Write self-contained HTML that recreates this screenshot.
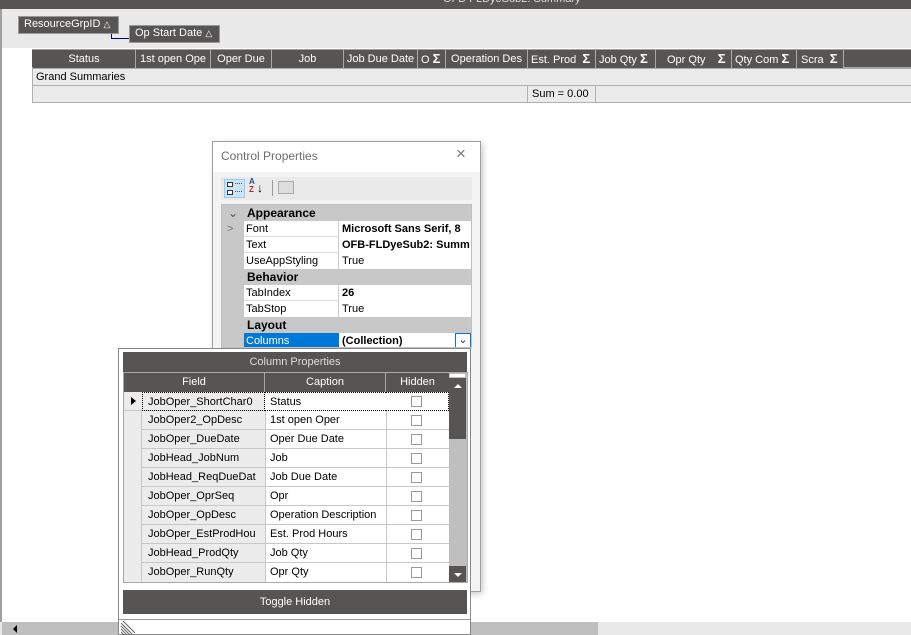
<!DOCTYPE html>
<html><head><meta charset="utf-8"><style>
*{margin:0;padding:0;box-sizing:border-box}
body{width:911px;height:635px;overflow:hidden;background:#fff;font-family:"Liberation Sans",Arial,sans-serif;font-size:11px;color:#000;position:relative}
.a{position:absolute}
.hd{background:#575553;color:#fff;text-align:center;line-height:18px;height:18px;border-right:1px solid #a9a9a9;white-space:nowrap;overflow:hidden;font-size:11px}
.sig{font-weight:bold;font-size:13px}
.pr{font-size:11px;line-height:16px;height:16px;white-space:nowrap;overflow:hidden}
.cr{height:19px;line-height:18px;border-bottom:1px solid #c8c8c8;font-size:11px}
.cb{position:absolute;width:11px;height:11px;border:1px solid #999;background:#fff;left:411px;top:4px}
</style></head><body>
<div class="a" style="left:0;top:0;width:911px;height:9px;background:#575553;overflow:hidden"><div class="a" style="left:443px;top:-7px;color:#ddd;font-size:11px">OFB-FLDyeSub2: Summary</div></div>
<div class="a" style="left:0;top:9px;width:911px;height:39px;background:#e9e9e9"></div>
<div class="a" style="left:0;top:9px;width:2px;height:613px;background:#a0a0a0"></div>
<div class="a" style="left:18px;top:16px;width:101px;height:18px;background:#575553;border:1px solid #999;color:#fff;line-height:15px;padding-left:5px">ResourceGrpID <span style="font-size:9px">&#9651;</span></div>
<div class="a" style="left:111px;top:34px;width:1px;height:5px;background:#00008b"></div>
<div class="a" style="left:111px;top:38px;width:19px;height:1px;background:#00008b"></div>
<div class="a" style="left:129px;top:25px;width:91px;height:18px;background:#575553;border:1px solid #999;color:#fff;line-height:15px;padding-left:5px">Op Start Date <span style="font-size:9px">&#9651;</span></div>
<div class="a" style="left:32px;top:49px;width:879px;height:20px;background:#575553;border-top:1px solid #a0a0a0;border-bottom:2px solid #a9a9a9"></div>
<div class="a hd" style="left:33px;top:50px;width:103px">Status</div>
<div class="a hd" style="left:136px;top:50px;width:75px">1st open Ope</div>
<div class="a hd" style="left:211px;top:50px;width:61px">Oper Due</div>
<div class="a hd" style="left:272px;top:50px;width:72px">Job</div>
<div class="a hd" style="left:344px;top:50px;width:74px">Job Due Date</div>
<div class="a hd" style="left:418px;top:50px;width:28px;text-align:left;padding-left:3px">O <span class="sig">&Sigma;</span></div>
<div class="a hd" style="left:446px;top:50px;width:82px">Operation Des</div>
<div class="a hd" style="left:528px;top:50px;width:68px;text-align:left;padding-left:3px">Est. Prod &nbsp;<span class="sig">&Sigma;</span></div>
<div class="a hd" style="left:596px;top:50px;width:60px;text-align:left;padding-left:3px">Job Qty <span class="sig">&Sigma;</span></div>
<div class="a hd" style="left:656px;top:50px;width:76px;text-align:left;padding-left:11px">Opr Qty &nbsp;&nbsp;&nbsp;<span class="sig">&Sigma;</span></div>
<div class="a hd" style="left:732px;top:50px;width:65px;text-align:left;padding-left:3px">Qty Com <span class="sig">&Sigma;</span></div>
<div class="a hd" style="left:797px;top:50px;width:47px;text-align:left;padding-left:4px">Scra &nbsp;<span class="sig">&Sigma;</span></div>
<div class="a" style="left:32px;top:69px;width:879px;height:17px;background:#ebebeb;border-left:1px solid #b0b0b0;border-bottom:1px solid #b0b0b0;line-height:16px;padding-left:3px">Grand Summaries</div>
<div class="a" style="left:32px;top:86px;width:879px;height:17px;background:#ebebeb;border-left:1px solid #b0b0b0;border-bottom:1px solid #b0b0b0"></div>
<div class="a" style="left:527px;top:86px;width:69px;height:17px;border-left:1px solid #b0b0b0;border-right:1px solid #b0b0b0;line-height:16px;padding-left:4px">Sum = 0.00</div>
<div class="a" style="left:0;top:622px;width:911px;height:13px;background:#e8e8e8"></div>
<div class="a" style="left:2px;top:622px;width:596px;height:13px;background:#bfbfbf"></div>
<div class="a" style="left:13px;top:625px;width:0;height:0;border-top:4px solid transparent;border-bottom:4px solid transparent;border-right:4px solid #000"></div>
<div class="a" style="left:212px;top:141px;width:269px;height:451px;background:#f3f3f3;border:1px solid #a0a0a0;box-shadow:2px 2px 6px rgba(0,0,0,.2)"></div>
<div class="a" style="left:213px;top:142px;width:267px;height:30px;background:#fff"></div>
<div class="a" style="left:221px;top:149px;color:#6d6d6d;font-size:12px">Control Properties</div>
<div class="a" style="left:456px;top:144px;color:#777;font-size:17px">&#215;</div>
<div class="a" style="left:221px;top:177px;width:251px;height:23px;background:#eaeaea"></div>
<div class="a" style="left:224px;top:179px;width:21px;height:19px;background:#cce4f7;border:1px solid #99c9ef"></div>
<div class="a" style="left:227px;top:182px;width:6px;height:5px;border:1px solid #333;background:#fff"></div>
<div class="a" style="left:227px;top:190px;width:6px;height:5px;border:1px solid #333;background:#fff"></div>
<div class="a" style="left:235px;top:183px;width:7px;height:1px;border-top:1px dotted #555"></div>
<div class="a" style="left:235px;top:191px;width:7px;height:1px;border-top:1px dotted #555"></div>
<div class="a" style="left:249px;top:178px;font-size:8px;font-weight:bold;line-height:8px;color:#1a4f9c">A<br><span style="color:#b03030">Z</span></div>
<div class="a" style="left:257px;top:180px;font-size:12px;line-height:16px">&#8595;</div>
<div class="a" style="left:272px;top:180px;width:1px;height:16px;background:#999"></div>
<div class="a" style="left:278px;top:181px;width:16px;height:13px;border:1px solid #aaa;background:#ddd"></div>
<div class="a" style="left:221px;top:204px;width:251px;height:144px;background:#fff;border:1px solid #c0c0c0;overflow:hidden">
 <div class="pr" style="background:#c8c8c8;font-weight:bold;font-size:12px;padding-left:25px"><span class="a" style="left:6px;font-weight:normal;color:#555">&#8964;</span>Appearance</div>
 <div class="pr" style="display:flex"><div style="width:22px;background:#c8c8c8;color:#777;padding-left:5px">&gt;</div><div style="width:95px;border-right:1px solid #ccc;padding-left:2px;border-bottom:1px solid #ddd">Font</div><div style="padding-left:3px;font-weight:bold">Microsoft Sans Serif, 8</div></div>
 <div class="pr" style="display:flex"><div style="width:22px;background:#c8c8c8"></div><div style="width:95px;border-right:1px solid #ccc;padding-left:2px;border-bottom:1px solid #ddd">Text</div><div style="padding-left:3px;font-weight:bold">OFB-FLDyeSub2: Summ</div></div>
 <div class="pr" style="display:flex"><div style="width:22px;background:#c8c8c8"></div><div style="width:95px;border-right:1px solid #ccc;padding-left:2px">UseAppStyling</div><div style="padding-left:3px">True</div></div>
 <div class="pr" style="background:#c8c8c8;font-weight:bold;font-size:12px;padding-left:25px">Behavior</div>
 <div class="pr" style="display:flex"><div style="width:22px;background:#c8c8c8"></div><div style="width:95px;border-right:1px solid #ccc;padding-left:2px;border-bottom:1px solid #ddd">TabIndex</div><div style="padding-left:3px;font-weight:bold">26</div></div>
 <div class="pr" style="display:flex"><div style="width:22px;background:#c8c8c8"></div><div style="width:95px;border-right:1px solid #ccc;padding-left:2px">TabStop</div><div style="padding-left:3px">True</div></div>
 <div class="pr" style="background:#c8c8c8;font-weight:bold;font-size:12px;padding-left:25px">Layout</div>
 <div class="pr" style="display:flex"><div style="width:22px;background:#c8c8c8"></div><div style="width:95px;background:#0078d7;color:#fff;padding-left:2px">Columns</div><div style="padding-left:3px;font-weight:bold;flex:1">(Collection)</div><div style="width:16px;height:15px;border:1px solid #0078d7;text-align:center;line-height:12px;color:#333">&#8964;</div></div>
</div>
<div class="a" style="left:469px;top:515px;width:2px;height:72px;background:#555"></div>
<div class="a" style="left:118px;top:348px;width:353px;height:287px;background:#fff;border:1px solid #888"></div>
<div class="a" style="left:123px;top:352px;width:344px;height:20px;background:#575553;color:#ddd;text-align:center;line-height:20px">Column Properties</div>
<div class="a" style="left:123px;top:372px;width:345px;height:211px;background:#ececec;border:1px solid #a9a9a9"></div>
<div class="a" style="left:124px;top:373px;width:325px;height:19px;background:#575553;color:#fff;line-height:19px;font-size:11px">
 <div class="a" style="left:0;width:141px;text-align:center;border-right:1px solid #a9a9a9;height:19px">Field</div>
 <div class="a" style="left:141px;width:121px;text-align:center;border-right:1px solid #a9a9a9;height:19px">Caption</div>
 <div class="a" style="left:262px;width:63px;text-align:center">Hidden</div>
</div>
<div class="a" style="left:124px;top:392px;width:325px;height:190px">
 <div class="cr a" style="top:0;width:325px"><div class="a" style="left:7px;top:5px;border-top:4px solid transparent;border-bottom:4px solid transparent;border-left:5px solid #000"></div><div class="a" style="left:18px;width:123px;height:19px;padding-left:5px;border:1px dotted #000">JobOper_ShortChar0</div><div class="a" style="left:141px;width:121px;height:19px;background:#fff;padding-left:5px;border-top:1px dotted #000;border-bottom:1px dotted #000">Status</div><div class="a" style="left:262px;width:63px;height:19px;background:#fff;border-top:1px dotted #000;border-bottom:1px dotted #000;border-right:1px dotted #000"></div><div class="cb" style="left:287px"></div></div>
</div>
<div class="a" style="left:124px;top:411px;width:325px;height:171px">
 <div class="a" style="left:0;top:0;width:18px;height:171px;border-right:1px solid #c8c8c8"></div>
 <div class="a" style="left:141px;top:0;width:184px;height:171px;background:#fff;border-left:1px solid #c8c8c8"></div>
 <div class="a" style="left:262px;top:0;width:1px;height:171px;background:#c8c8c8"></div>
</div>
<div class="a" style="left:142px;top:411px;width:307px;font-size:11px">
 <div class="cr" style="position:relative;padding-left:6px">JobOper2_OpDesc<span class="a" style="left:128px">1st open Oper</span><div class="cb" style="left:269px"></div></div>
 <div class="cr" style="position:relative;padding-left:6px">JobOper_DueDate<span class="a" style="left:128px">Oper Due Date</span><div class="cb" style="left:269px"></div></div>
 <div class="cr" style="position:relative;padding-left:6px">JobHead_JobNum<span class="a" style="left:128px">Job</span><div class="cb" style="left:269px"></div></div>
 <div class="cr" style="position:relative;padding-left:6px">JobHead_ReqDueDat<span class="a" style="left:128px">Job Due Date</span><div class="cb" style="left:269px"></div></div>
 <div class="cr" style="position:relative;padding-left:6px">JobOper_OprSeq<span class="a" style="left:128px">Opr</span><div class="cb" style="left:269px"></div></div>
 <div class="cr" style="position:relative;padding-left:6px">JobOper_OpDesc<span class="a" style="left:128px">Operation Description</span><div class="cb" style="left:269px"></div></div>
 <div class="cr" style="position:relative;padding-left:6px">JobOper_EstProdHou<span class="a" style="left:128px">Est. Prod Hours</span><div class="cb" style="left:269px"></div></div>
 <div class="cr" style="position:relative;padding-left:6px">JobHead_ProdQty<span class="a" style="left:128px">Job Qty</span><div class="cb" style="left:269px"></div></div>
 <div class="cr" style="position:relative;border-bottom:none;padding-left:6px">JobOper_RunQty<span class="a" style="left:128px">Opr Qty</span><div class="cb" style="left:269px"></div></div>
</div>
<div class="a" style="left:449px;top:373px;width:18px;height:209px;background:#bfbfbf"></div>
<div class="a" style="left:450px;top:374px;width:15px;height:3px;background:#fff"></div>
<div class="a" style="left:449px;top:378px;width:17px;height:61px;background:#575553"></div>
<div class="a" style="left:454px;top:384px;border-left:4px solid transparent;border-right:4px solid transparent;border-bottom:4px solid #fff"></div>
<div class="a" style="left:449px;top:566px;width:17px;height:16px;background:#575553"></div>
<div class="a" style="left:454px;top:573px;border-left:4px solid transparent;border-right:4px solid transparent;border-top:4px solid #fff"></div>
<div class="a" style="left:123px;top:590px;width:344px;height:24px;background:#575553;color:#fff;text-align:center;line-height:24px">Toggle Hidden</div>
<div class="a" style="left:119px;top:619px;width:351px;height:1px;background:#999"></div>
<svg class="a" style="left:121px;top:621px" width="14" height="14"><path d="M0 2L12 14M0 5L9 14M0 8L6 14M0 11L3 14M2 0L14 12" stroke="#666" stroke-width="1"/></svg>
</body></html>
